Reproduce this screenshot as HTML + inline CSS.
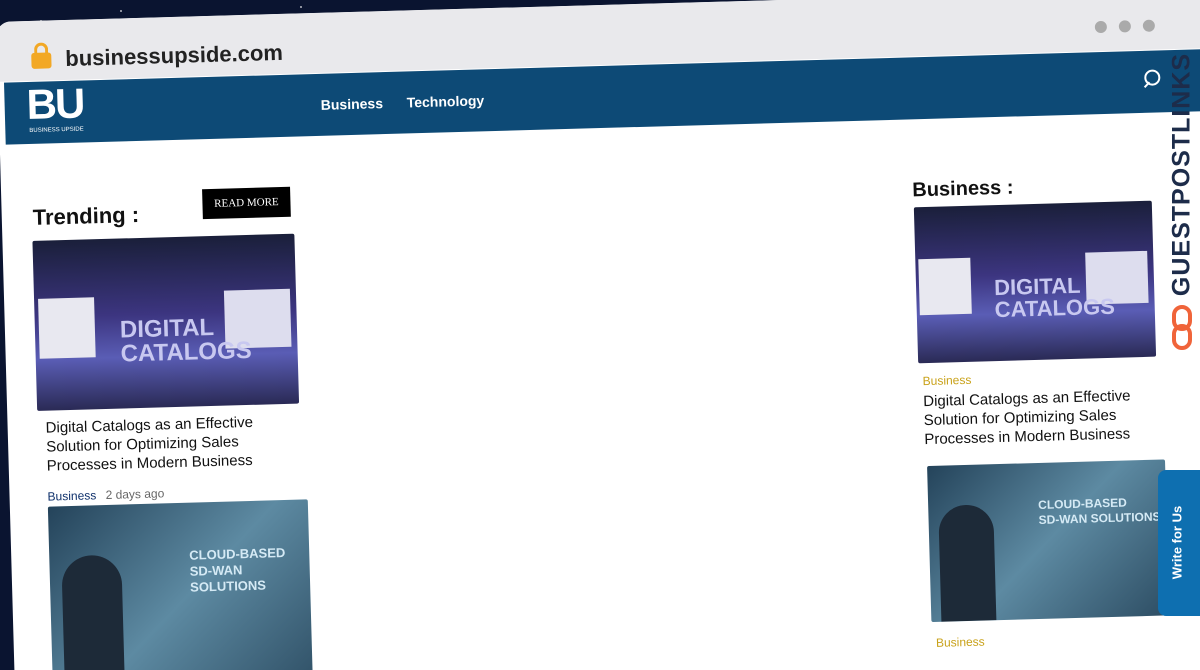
<!DOCTYPE html>
<html><head><meta charset="utf-8"><style>
*{margin:0;padding:0;box-sizing:border-box}
html,body{width:1200px;height:670px;overflow:hidden}
body{background:#0a1430;font-family:"Liberation Sans",sans-serif;position:relative}
.star{position:absolute;width:2px;height:2px;background:#fff;border-radius:50%;opacity:.7}
#w{position:absolute;left:5px;top:5px;width:1240px;height:700px;background:#fff;border-radius:14px;transform:rotate(-1.6deg);transform-origin:600px 320px;overflow:hidden}
.abs{position:absolute}
.img{position:absolute;border-radius:2px;overflow:hidden}
</style></head><body>
<div class="star" style="left:120px;top:10px"></div><div class="star" style="left:300px;top:6px"></div><div class="star" style="left:520px;top:12px"></div><div class="star" style="left:760px;top:4px"></div><div class="star" style="left:980px;top:8px"></div><div class="star" style="left:40px;top:20px"></div>
<div id="w">
 <div class="abs" style="left:0;top:0;width:1240px;height:60px;background:#e9e9ec"></div>
 <div class="abs" style="left:34px;top:32px;width:20px;height:16px;background:#f2a825;border-radius:3px"></div>
 <div class="abs" style="left:37px;top:22px;width:14px;height:14px;border:3px solid #f2a825;border-bottom:none;border-radius:7px 7px 0 0"></div>
 <div class="abs" style="left:68px;top:26px;font-size:22px;font-weight:bold;color:#222">businessupside.com</div>
 <div class="abs" style="left:1098px;top:30px;width:12px;height:12px;border-radius:50%;background:#aaa"></div>
 <div class="abs" style="left:1122px;top:30px;width:12px;height:12px;border-radius:50%;background:#aaa"></div>
 <div class="abs" style="left:1146px;top:30px;width:12px;height:12px;border-radius:50%;background:#aaa"></div>
 <div class="abs" style="left:6px;top:61px;width:1234px;height:62px;background:#0d4a76"></div>
 <div class="abs" style="left:28px;top:60px;font-size:42px;font-weight:bold;color:#fff;letter-spacing:-2px">BU</div>
 <div class="abs" style="left:30px;top:107px;font-size:6px;color:#fff">BUSINESS UPSIDE</div>
 <div class="abs" style="left:322px;top:84px;font-size:14px;font-weight:bold;color:#fff">Business</div>
 <div class="abs" style="left:408px;top:84px;font-size:14px;font-weight:bold;color:#fff">Technology</div>
 <div class="abs" style="left:1146px;top:80px;width:16px;height:16px;border:2px solid #fff;border-radius:50%"></div>
 <div class="abs" style="left:1145px;top:94px;width:7px;height:2px;background:#fff;transform:rotate(-45deg)"></div>
 <div class="abs" style="left:31px;top:184px;font-size:22px;font-weight:bold;color:#111">Trending :</div>
 <div class="abs" style="left:201px;top:173px;width:88px;height:30px;background:#000;color:#fff;font-family:'Liberation Serif',serif;font-size:11px;line-height:30px;text-align:center">READ MORE</div>
 <div class="img" style="left:30px;top:220px;width:262px;height:170px;background:linear-gradient(180deg,#1a1f3a 0%,#3c3580 45%,#5a5db5 70%,#2a2a55 100%)">
  <div class="abs" style="left:4px;top:58px;width:56px;height:60px;background:#e8e8f0"></div>
  <div class="abs" style="left:190px;top:55px;width:66px;height:58px;background:#dde"></div>
  <div class="abs" style="left:85px;top:80px;font-size:24px;font-weight:bold;color:#c8c8f0;line-height:24px">DIGITAL<br>CATALOGS</div>
 </div>
 <div class="abs" style="left:38px;top:398px;width:250px;font-size:15px;line-height:19px;color:#111">Digital Catalogs as an Effective Solution for Optimizing Sales Processes in Modern Business</div>
 <div class="abs" style="left:38px;top:469px;font-size:12px;color:#0d2f6a">Business <span style="color:#666;margin-left:6px">2 days ago</span></div>
 <div class="img" style="left:38px;top:486px;width:260px;height:200px;background:linear-gradient(135deg,#24435a,#5d8aa2 50%,#2d4d63)">
  <div class="abs" style="left:140px;top:45px;font-size:13px;font-weight:bold;color:#d5eaf5;line-height:16px">CLOUD-BASED<br>SD-WAN SOLUTIONS</div>
  <div class="abs" style="left:12px;top:50px;width:60px;height:150px;background:#1d2a38;border-radius:30px 30px 0 0"></div>
 </div>
 <div class="abs" style="left:911px;top:183px;font-size:20px;font-weight:bold;color:#111">Business :</div>
 <div class="img" style="left:912px;top:211px;width:238px;height:156px;background:linear-gradient(180deg,#1a1f3a 0%,#3c3580 45%,#5a5db5 70%,#2a2a55 100%)">
  <div class="abs" style="left:3px;top:52px;width:52px;height:56px;background:#e8e8f0"></div>
  <div class="abs" style="left:170px;top:50px;width:62px;height:52px;background:#dde"></div>
  <div class="abs" style="left:78px;top:72px;font-size:22px;font-weight:bold;color:#c8c8f0;line-height:22px">DIGITAL<br>CATALOGS</div>
 </div>
 <div class="abs" style="left:916px;top:378px;font-size:12px;color:#c9a21a">Business</div>
 <div class="abs" style="left:916px;top:396px;width:230px;font-size:15px;line-height:19px;color:#111">Digital Catalogs as an Effective Solution for Optimizing Sales Processes in Modern Business</div>
 <div class="img" style="left:918px;top:470px;width:238px;height:156px;background:linear-gradient(135deg,#24435a,#5d8aa2 50%,#2d4d63)">
  <div class="abs" style="left:110px;top:35px;font-size:12px;font-weight:bold;color:#d5eaf5;line-height:15px">CLOUD-BASED<br>SD-WAN SOLUTIONS</div>
  <div class="abs" style="left:10px;top:40px;width:55px;height:116px;background:#1d2a38;border-radius:28px 28px 0 0"></div>
 </div>
 <div class="abs" style="left:922px;top:640px;font-size:12px;color:#c9a21a">Business</div>
</div>
<div class="abs" style="left:1158px;top:470px;width:45px;height:146px;background:#0e6fb0;border-radius:8px 0 0 8px"></div>
<div class="abs" style="left:1132px;top:535px;width:90px;font-size:13px;font-weight:bold;color:#fff;transform:rotate(-90deg);text-align:center">Write for Us</div>
<div class="abs" style="left:1052px;top:160px;width:260px;font-size:25px;font-weight:bold;color:#1d2c4a;transform:rotate(-90deg);text-align:center;letter-spacing:1px">GUESTPOSTLINKS</div>
<div class="abs" style="left:1172px;top:305px;width:20px;height:26px;border:4px solid #f0643a;border-radius:10px"></div>
<div class="abs" style="left:1172px;top:324px;width:20px;height:26px;border:4px solid #f0643a;border-radius:10px"></div>
</body></html>
